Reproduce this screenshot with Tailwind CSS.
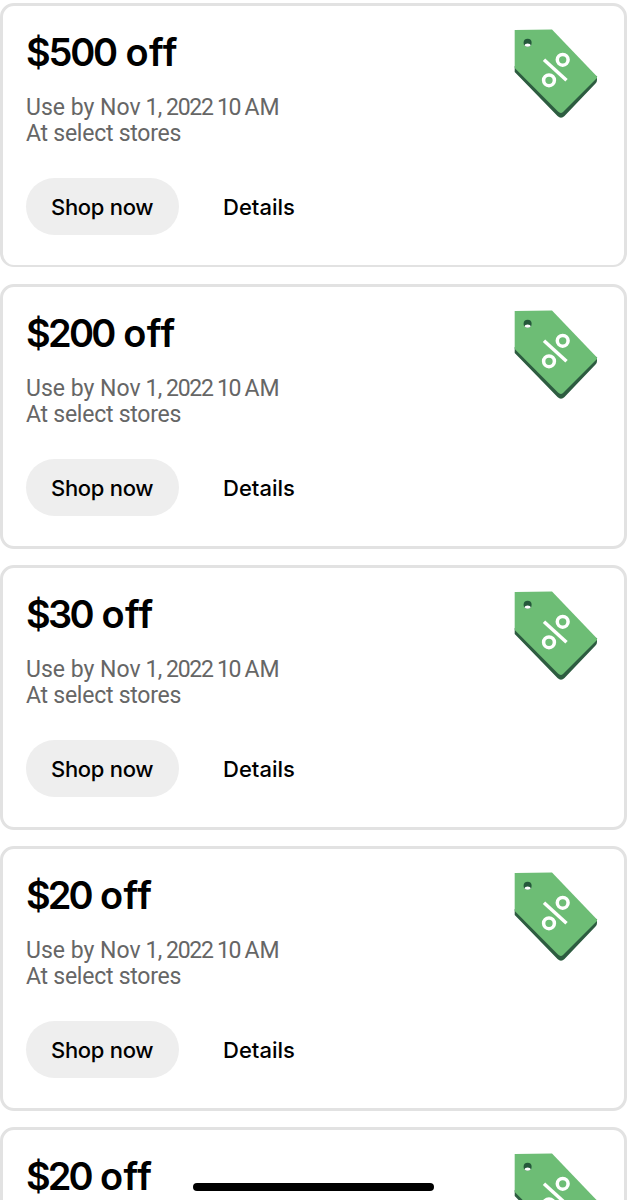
<!DOCTYPE html>
<html lang="en">
<head>
<meta charset="utf-8">
<meta name="viewport" content="width=device-width, initial-scale=1">
<title>Promotions</title>
<script src="https://cdn.jsdelivr.net/npm/@tailwindcss/browser@4"></script>
</head>
<body class="bg-white">
<main id="list" class="h-[1200px] w-[628px] overflow-hidden pt-[3px] pr-px flex flex-col gap-4 font-['Inter',sans-serif]"></main>
<div class="fixed left-[193px] top-[1183px] h-2 w-[241px] rounded-full bg-black"></div>
<template id="card">
  <section class="flex h-[265px] shrink-0 items-start justify-between rounded-[14px] border-[3px] border-[#e2e2e2] bg-white pl-[23px] pr-[26px] first:mb-px first:h-[264px] first:border-b-2">
    <div class="flex flex-col items-start whitespace-nowrap">
      <h2 class="mt-[22px] h-12 text-[38px] leading-[48px] font-semibold text-black"><span class="amount"></span> <span class="tracking-[0.4px]">off</span></h2>
      <div class="body">
        <p class="mt-[19px] font-['Roboto',sans-serif] text-[23px] leading-[26px] text-[#666666]"><span class="block">Use by Nov<span class="tracking-[-0.7px]"> 1,</span><span class="tracking-[-1.3px]"> 2022 10 </span>AM</span><span class="block tracking-[-0.25px]">At select stores</span></p>
        <div class="mt-[31px] flex items-center text-[22px] font-medium text-black">
          <button class="flex h-[57px] w-[153px] items-center rounded-full bg-[#eeeeee] pt-0.5 pl-[25px] tracking-[-0.3px]">Shop now</button>
          <button class="ml-[44px] pt-0.5">Details</button>
        </div>
      </div>
    </div>
    <svg class="mt-[23px] h-[90px] w-[84px] shrink-0" viewBox="514 29 84 90" fill="none">
      <path d="M514.7 66V72L557.500 116Q561 119.500 564.500 116L595.500 83.500Q597 82 597 80V76Z" fill="#2d5c40"/>
      <path d="M514.700 30L552 29.600L597 76.500V78L563 112Q560.500 114 558 111.500L514.700 68Z" fill="#6dbd75"/>
      <circle cx="527.600" cy="42.800" r="4" fill="#24583a"/>
      <path d="M524.400 45.300Q525 43.600 527.600 43.600T530.900 45.300Q529.600 46.800 527.600 46.800T524.400 45.300Z" fill="white"/>
      <g stroke="white" stroke-width="3.500"><circle cx="562.700" cy="59.800" r="5.400"/><circle cx="549" cy="80.300" r="5.400"/><path d="M544 59.800L566.500 80.200"/></g>
    </svg>
  </section>
</template>
<script>
const offers = [['$500',-2.2],['$200',-2.7],['$30',-2.7],['$20',-3]];
offers.push(offers[3]);
const list = document.getElementById('list');
offers.forEach(([amount,tracking],i) => {
  const card = document.getElementById('card').content.cloneNode(true);
  const label = card.querySelector('.amount');
  label.textContent = amount;
  label.style.letterSpacing = tracking + 'px';
  if (i === offers.length - 1) card.querySelector('.body').remove();
  list.appendChild(card);
});
</script>
</body>
</html>
